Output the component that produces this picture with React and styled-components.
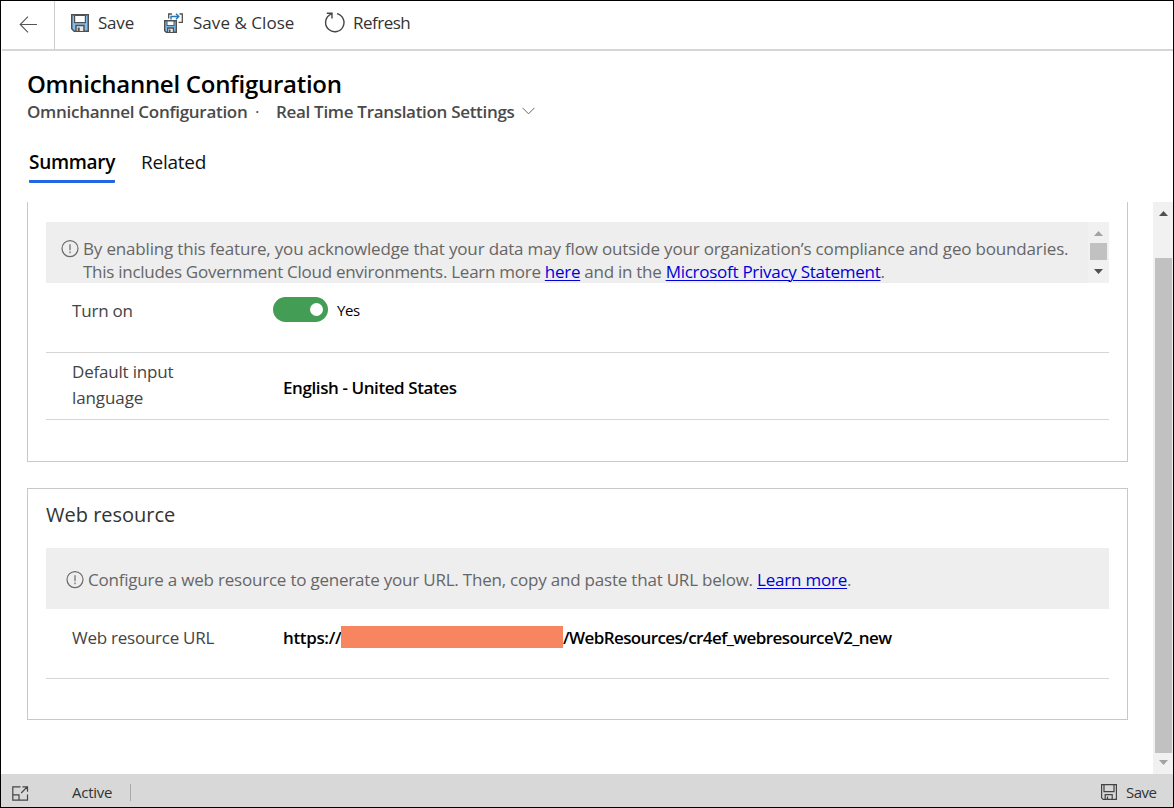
import React from "react";
import styled, { createGlobalStyle } from "styled-components";

const Global = createGlobalStyle`
  *, *::before, *::after { box-sizing: border-box; }
  body { margin: 0; background: #fff; font-family: "Open Sans", "Noto Sans", sans-serif; color: #333; }
`;

const Window = styled.div`
  width: 1174px;
  height: 808px;
  border: 1px solid #000;
  display: flex;
  flex-direction: column;
  background: #fff;
  overflow: hidden;
`;

const Text = styled.span`
  white-space: nowrap;
  font-size: ${(p) => p.$size || 17}px;
  font-weight: ${(p) => p.$weight || 400};
  letter-spacing: ${(p) => p.$track || 0}px;
  color: ${(p) => p.$color || "inherit"};
`;

const Toolbar = styled.div`
  flex: none;
  height: 50px;
  display: flex;
  align-items: stretch;
  border-bottom: 2px solid #d6d6d6;
  margin-left: 1px;
`;

const BackButton = styled.div`
  width: 53px;
  padding: 15px 0 0 17px;
  border-right: 1px solid #ccc;
`;

const Command = styled.div`
  display: flex;
  height: 43px;
  width: ${(p) => p.$width}px;
  align-items: center;
  gap: ${(p) => p.$gap}px;
  margin-left: ${(p) => p.$lead || 0}px;
  svg { flex: none; }
`;

const Header = styled.header`
  flex: none;
  height: 151px;
  padding: 18px 0 0 26px;
  display: flex;
  flex-direction: column;
`;

const Title = styled.h1`
  margin: 0;
  height: 30px;
  line-height: 30px;
  font-size: 24px;
  font-weight: 600;
  letter-spacing: -0.27px;
  color: #000;
  white-space: nowrap;
`;

const Subtitle = styled.div`
  height: 24px;
  display: flex;
  align-items: center;
  color: #4a4a4a;
  svg { margin-left: 7px; }
`;

const SubtitleName = styled.div`
  width: 221px;
  display: flex;
`;

const Dot = styled.span`
  width: 28px;
  padding-left: 7px;
  font-size: 17px;
`;

const FormName = styled.div`
  width: 239px;
  display: flex;
`;

const Tabs = styled.nav`
  display: flex;
  gap: 26px;
  margin: 26px 0 0 2px;
`;

const Tab = styled.div`
  height: 34px;
  width: ${(p) => p.$width}px;
  line-height: 27px;
  color: ${(p) => (p.$active ? "#000" : "#111")};
  border-bottom: 3px solid ${(p) => (p.$active ? "#2266e3" : "transparent")};
  border-radius: 1px;
`;

const Body = styled.div`
  flex: none;
  height: 572px;
  display: flex;
`;

const Content = styled.main`
  width: 1152px;
  padding-left: 26px;
`;

const Card = styled.section`
  width: 1101px;
  height: ${(p) => p.$height}px;
  margin-bottom: 26px;
  padding: 0 18px;
  border: 1px solid #c8c8c8;
  ${(p) => p.$cut && "border-top: 0; padding-top: 20px;"}
`;

const CardTitle = styled.h2`
  margin: 0;
  height: 59px;
  line-height: 51px;
  font-weight: 400;
  font-size: 20px;
  letter-spacing: 0;
  color: #333;
`;

const Notice = styled.div`
  height: 61px;
  display: flex;
  background: #eee;
  color: #666;
  > svg { flex: none; margin: ${(p) => p.$iconTop}px 4px 0 ${(p) => p.$lead}px; }
`;

const NoticeText = styled.div`
  flex: 1;
  display: flex;
  flex-direction: column;
  padding-top: ${(p) => p.$top}px;
  line-height: 23px;
`;

const Link = styled.a`
  color: #0000d8;
  text-decoration: underline;
  text-decoration-thickness: 1px;
  text-underline-offset: 2px;
`;

const Row = styled.div`
  display: flex;
  height: ${(p) => p.$height}px;
  border-bottom: 1px solid #d6d6d6;
`;

const Label = styled.div`
  width: ${(p) => p.$width}px;
  padding: ${(p) => p.$top}px 0 0 26px;
  line-height: 26px;
  display: flex;
  flex-direction: column;
  color: #444;
`;

const Value = styled.div`
  display: flex;
  align-items: flex-start;
  padding-top: ${(p) => p.$top}px;
  line-height: 26px;
  color: #000;
`;

const Toggle = styled.div`
  width: 55px;
  height: 25px;
  margin-right: 9px;
  padding: 6px 5px;
  display: flex;
  justify-content: flex-end;
  border-radius: 13px;
  background: #439d55;
  &::after { content: ""; width: 13px; height: 13px; border-radius: 50%; background: #fff; }
`;

const YesText = styled.div`
  line-height: 27px;
`;

const Protocol = styled.div`
  width: 58px;
`;

const Redaction = styled.div`
  width: 222px;
  height: 22px;
  margin-top: 1px;
  background: #f78660;
`;

const InnerScroll = styled.div`
  flex: none;
  width: 21px;
  background: #f1f1f1;
  display: flex;
  flex-direction: column;
  align-items: center;
  padding: 9px 1px 0 0;
`;

const InnerThumb = styled.div`
  width: 17px;
  height: 17px;
  margin: 7px 0 9px;
  background: #c1c1c1;
`;

const Scroll = styled.div`
  width: 20px;
  background: #f1f1f1;
  display: flex;
  flex-direction: column;
  align-items: center;
  padding: 9px 1px 0 2px;
`;

const Thumb = styled.div`
  width: 17px;
  height: 495px;
  margin: 42px 0 7px;
  background: #c1c1c1;
`;

const Footer = styled.footer`
  flex: 1;
  display: flex;
  align-items: center;
  background: #d8d8d8;
  padding: 4px 16px 0 11px;
  color: #333;
  > svg { margin-top: 2px; }
`;

const FooterStatus = styled.div`
  width: 59px;
  height: 17px;
  margin-left: 43px;
  display: flex;
  align-items: center;
  border-right: 1px solid #aaa;
  ${Text} { margin-top: -2px; }
`;

const FooterSave = styled.div`
  margin-left: auto;
  width: 56px;
  display: flex;
  align-items: center;
  gap: 9px;
  svg { flex: none; margin-top: -1px; }
  ${Text} { margin-top: -2px; }
`;

const BackIcon = () => (
  <svg width="19" height="17" viewBox="0 0 19 17" fill="none" stroke="#555" strokeWidth="1.1">
    <path d="M1 8.5H18M9 0.7L1.2 8.5L9 16.3" />
  </svg>
);

const SaveIcon = () => (
  <svg width="18" height="18" viewBox="0 0 18 18">
    <path d="M0.75 0.75H17.25V17.25H3.2L0.75 14.8Z" fill="#83beec" stroke="#505050" strokeWidth="1.5" />
    <rect x="3.6" y="1.4" width="10.8" height="7.2" fill="#fff" stroke="#505050" strokeWidth="1.2" />
    <path d="M5 17V11.5H13V17" fill="#e8e8e8" stroke="#505050" strokeWidth="1.5" />
    <rect x="6.7" y="13.5" width="2" height="3.5" fill="#505050" />
  </svg>
);

const SaveCloseIcon = () => (
  <svg width="20" height="20" viewBox="0 0 20 20" fill="none">
    <path d="M4.7 5.5V1H8M15.5 1H18.3V9.3H14.5" stroke="#505050" strokeWidth="1.3" />
    <path d="M7 6.5V3.5H14.5M12 0.8L14.8 3.5L12 6.2" stroke="#2277bd" strokeWidth="1.4" />
    <path d="M0.7 7.7H12.3V19.3H2.3L0.7 17.7Z" fill="#83beec" stroke="#505050" strokeWidth="1.4" />
    <rect x="3" y="8" width="7" height="4.6" fill="#fff" stroke="#505050" />
    <path d="M3.7 19V15H9.5V19" fill="#e8e8e8" stroke="#505050" strokeWidth="1.3" />
    <rect x="5" y="16.5" width="1.5" height="2.5" fill="#505050" />
  </svg>
);

const RefreshIcon = () => (
  <svg width="21" height="21" viewBox="0 0 21 21" fill="none" stroke="#444" strokeWidth="1.4">
    <path d="M13 1.6A9.2 9.2 0 1 1 5.2 3.2L8 1.2M2.8 1.2H8V6.6" />
  </svg>
);

const ChevronIcon = () => (
  <svg width="13" height="8" viewBox="0 0 13 8" fill="none" stroke="#666">
    <path d="M0.5 0.8L6.5 6.8L12.5 0.8" />
  </svg>
);

const AlertIcon = () => (
  <svg width="18" height="18" viewBox="0 0 18 18" fill="none" stroke="#6a6a6a" strokeWidth="1.2">
    <circle cx="9" cy="8.6" r="8" />
    <path d="M9 4.2V10.2M9 11.6V13.2" />
  </svg>
);

const ArrowIcon = ({ down, color }) => (
  <svg width="9" height="5" viewBox="0 0 9 5" fill={color}>
    <path d={down ? "M0 0H9L4.5 5Z" : "M0 5H9L4.5 0Z"} />
  </svg>
);

const PopoutIcon = () => (
  <svg width="17" height="15" viewBox="0 0 17 15" fill="none" stroke="#444" strokeWidth="1.2">
    <path d="M8.5 0.8H0.8V14.2H15.5V8.5M0.8 8.8H7V14M9.2 7L15.2 0.9M10.5 0.8H15.5V5.8" />
  </svg>
);

const FooterSaveIcon = () => (
  <svg width="16" height="16" viewBox="0 0 16 16" fill="none" stroke="#444" strokeWidth="1.2">
    <path d="M0.6 0.6H15.4V15.4H2.2L0.6 13.8Z" />
    <path d="M3 0.8V7.6H13V0.8M4.2 15.2V10.6H11.2V15.2M6.5 12.5V15" />
  </svg>
);

export default function App() {
  return (
    <>
      <Global />
      <Window>
        <Toolbar>
          <BackButton><BackIcon /></BackButton>
          <Command $lead={16} $gap={9} $width={93}><SaveIcon /><Text $track={-0.2}>Save</Text></Command>
          <Command $gap={9} $width={160}><SaveCloseIcon /><Text $track={0.04}>Save &amp; Close</Text></Command>
          <Command $gap={8} $width={100}><RefreshIcon /><Text $track={-0.5}>Refresh</Text></Command>
        </Toolbar>
        <Header>
          <Title>Omnichannel Configuration</Title>
          <Subtitle>
            <SubtitleName><Text $weight={600} $track={-0.29}>Omnichannel Configuration</Text></SubtitleName>
            <Dot>·</Dot>
            <FormName><Text $weight={600} $track={-0.31}>Real Time Translation Settings</Text></FormName>
            <ChevronIcon />
          </Subtitle>
          <Tabs>
            <Tab $active $width={86}><Text $size={19} $weight={600} $track={-0.3}>Summary</Text></Tab>
            <Tab $width={66}><Text $size={19} $track={-0.25}>Related</Text></Tab>
          </Tabs>
        </Header>
        <Body>
          <Content>
            <Card $cut $height={260}>
              <Notice $lead={15} $iconTop={18}>
                <AlertIcon />
                <NoticeText $top={15}>
                  <Text $track={-0.17}>By enabling this feature, you acknowledge that your data may flow outside your organization’s compliance and geo boundaries.</Text>
                  <Text $track={-0.27}>This includes Government Cloud environments. Learn more <Link>here</Link> and in the <Link>Microsoft Privacy Statement</Link>.</Text>
                </NoticeText>
                <InnerScroll>
                  <ArrowIcon color="#a3a3a3" />
                  <InnerThumb />
                  <ArrowIcon down color="#505050" />
                </InnerScroll>
              </Notice>
              <Row $height={70}>
                <Label $top={15} $width={227}><Text $track={-0.2}>Turn on</Text></Label>
                <Value $top={14}><Toggle /><YesText><Text $size={15} $track={-0.45}>Yes</Text></YesText></Value>
              </Row>
              <Row $height={67}>
                <Label $top={6} $width={237}><Text $track={-0.2}>Default input</Text><Text $track={-0.1}>language</Text></Label>
                <Value $top={22}><Text $weight={600} $track={-0.41}>English - United States</Text></Value>
              </Row>
            </Card>
            <Card $height={232}>
              <CardTitle>Web resource</CardTitle>
              <Notice $lead={20} $iconTop={23}>
                <AlertIcon />
                <NoticeText $top={20}>
                  <Text $track={-0.21}>Configure a web resource to generate your URL. Then, copy and paste that URL below. <Link>Learn more</Link>.</Text>
                </NoticeText>
              </Notice>
              <Row $height={70}>
                <Label $top={16} $width={237}><Text $track={-0.25}>Web resource URL</Text></Label>
                <Value $top={16}>
                  <Protocol><Text $weight={600} $track={-0.35}>https://</Text></Protocol>
                  <Redaction />
                  <Text $weight={600} $track={-0.6}>/WebResources/cr4ef_webresourceV2_new</Text>
                </Value>
              </Row>
            </Card>
          </Content>
          <Scroll>
            <ArrowIcon color="#505050" />
            <Thumb />
            <ArrowIcon down color="#a3a3a3" />
          </Scroll>
        </Body>
        <Footer>
          <PopoutIcon />
          <FooterStatus><Text $size={15} $track={-0.25}>Active</Text></FooterStatus>
          <FooterSave><FooterSaveIcon /><Text $size={15} $track={-0.5}>Save</Text></FooterSave>
        </Footer>
      </Window>
    </>
  );
}
